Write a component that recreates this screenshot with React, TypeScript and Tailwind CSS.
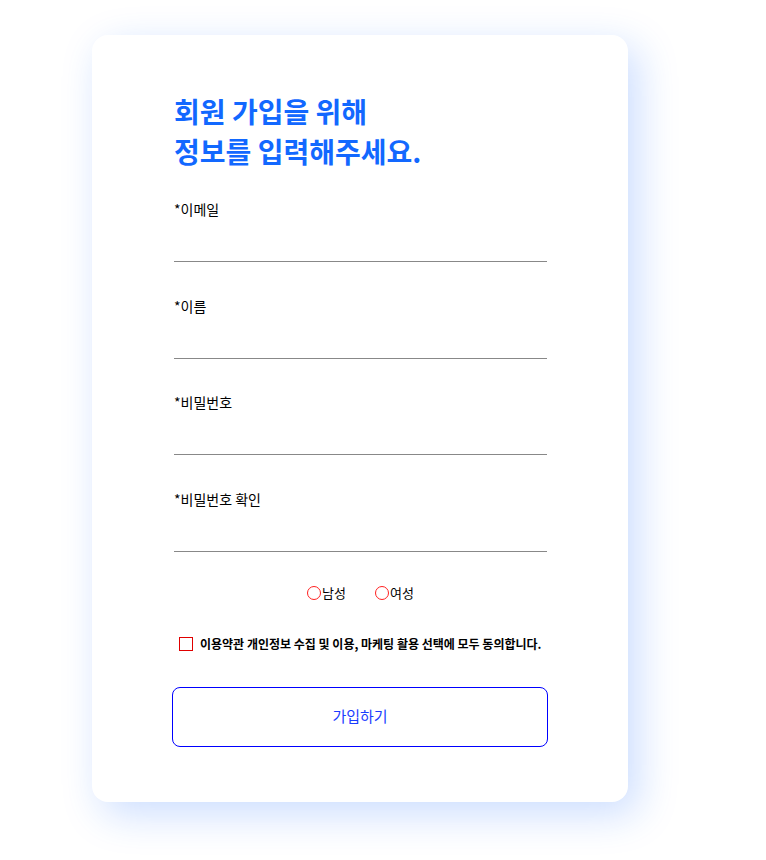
import React from "react"

const font = { fontFamily: '"Noto Sans CJK KR", "Noto Sans", sans-serif' }

const fields = ["이메일", "이름", "비밀번호", "비밀번호 확인"]

export default function App() {
  return (
    <div className="min-h-[860px] bg-white pt-[35px] pl-[92px]" style={font}>
      <div className="w-[536px] h-[767px] rounded-2xl bg-white shadow-[10px_12px_40px_rgba(20,100,255,0.22)] px-[82px] pt-[56px]">
        <h1 className="text-[28px] leading-[40px] font-bold text-[#1268ff]">
          회원 가입을 위해
          <br />
          정보를 입력해주세요.
        </h1>

        <div className="mt-[28px] w-[373px]">
          {fields.map((f, i) => (
            <div key={f} className={i > 0 ? "mt-[33.5px]" : ""}>
              <label className="block text-[14px] leading-[20px] text-black">*{f}</label>
              <input
                type={f.startsWith("비밀번호") ? "password" : "text"}
                className="block w-full h-[43px] border-b border-[#888] outline-none text-sm"
              />
            </div>
          ))}
        </div>

        <div className="mt-[33px] w-[373px] flex justify-center gap-[29px] text-[13px] leading-[16px] text-black">
          <label className="flex items-center">
            <span className="w-[14px] h-[14px] rounded-full border border-[#ff2020]" />
            <span className="ml-[1px]">남성</span>
          </label>
          <label className="flex items-center">
            <span className="w-[14px] h-[14px] rounded-full border border-[#ff2020]" />
            <span className="ml-[1px]">여성</span>
          </label>
        </div>

        <div className="mt-[35px] pl-[5px] flex items-center">
          <span className="w-[14px] h-[14px] border border-[#e00000]" />
          <span className="ml-[7px] text-[12px] font-bold text-black leading-[16px]">
            이용약관 개인정보 수집 및 이용, 마케팅 활용 선택에 모두 동의합니다.
          </span>
        </div>

        <button className="mt-[35px] -ml-[2px] w-[376px] h-[60px] rounded-lg border border-[#0000ff] text-[15px] text-[#1a3cff] bg-white">
          가입하기
        </button>
      </div>
    </div>
  )
}
